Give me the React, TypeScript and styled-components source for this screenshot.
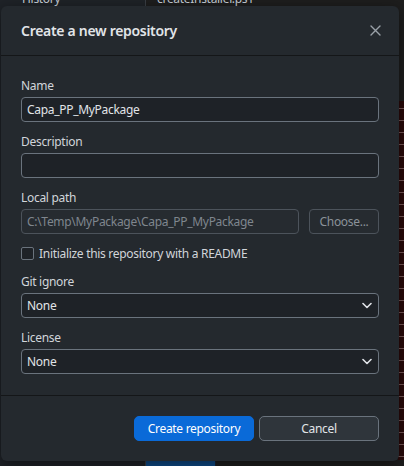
import React from "react";
import styled, { createGlobalStyle } from "styled-components";

const Global = createGlobalStyle`
  html, body { margin: 0; padding: 0; background: #1b1f23; }
  body { width: 404px; height: 466px; overflow: hidden; font-family: "Noto Sans", "Open Sans", sans-serif; }
  * { box-sizing: border-box; }
`;

const Stage = styled.div`
  position: relative;
  width: 404px;
  height: 466px;
  overflow: hidden;
  display: flex;
  background: #1e1e1e;
`;

const LeftPane = styled.div`
  width: 146px;
  flex: none;
  background: #1f2328;
  border-right: 1px solid #3a3f45;
  display: flex;
  flex-direction: column;
`;

const RightPane = styled.div`
  flex: 1;
  display: flex;
  flex-direction: column;
  background: #1e1e1e;
`;

const TabText = styled.div<{ $pad: number }>`
  height: 14px;
  line-height: 14px;
  margin-top: -8px;
  padding-left: ${(p) => p.$pad}px;
  font-size: 12px;
  letter-spacing: -0.3px;
  color: #c9d1d9;
  white-space: nowrap;
`;

const CodeArea = styled.div`
  flex: 1;
  display: flex;
  justify-content: flex-end;
`;

const CodeStrip = styled.div`
  width: 6px;
  display: flex;
  flex-direction: column;
`;

const CodeTop = styled.div`
  height: 95px;
  background: #1e1e1e;
`;

const CodeRed = styled.div`
  flex: 1;
  background: repeating-linear-gradient(
    180deg,
    #2b0a0a 0px,
    #2b0a0a 7px,
    #7a5a5a 7px,
    #7a5a5a 8px,
    #2b0a0a 8px,
    #2b0a0a 12px
  );
`;

const BlueBlock = styled.div`
  width: 70px;
  height: 6px;
  margin-top: auto;
  background: #0e4b8a;
  border-right: 1px solid #1a2230;
`;

const Dialog = styled.div`
  position: absolute;
  left: 1px;
  top: 6px;
  width: 398px;
  height: 455px;
  background: #24292e;
  border-radius: 6px;
  box-shadow: 0 4px 16px rgba(0, 0, 0, 0.5);
  display: flex;
  flex-direction: column;
  color: #d1d5da;
  letter-spacing: -0.3px;
`;

const Header = styled.div`
  height: 50px;
  flex: none;
  display: flex;
  align-items: center;
  justify-content: space-between;
  padding: 0 16px 0 20px;
  border-bottom: 1px solid #141618;
`;

const Title = styled.h1`
  margin: 0;
  font-size: 14px;
  font-weight: 600;
  color: #e1e4e8;
  letter-spacing: -0.3px;
`;

const CloseButton = styled.button`
  width: 16px;
  height: 16px;
  padding: 0;
  border: none;
  background: transparent;
  display: flex;
  align-items: center;
  justify-content: center;
`;

const Body = styled.div`
  flex: 1;
  padding: 22px 20px 0 20px;
  display: flex;
  flex-direction: column;
  border-bottom: 1px solid #141618;
`;

const Field = styled.div<{ $gap?: number }>`
  display: flex;
  flex-direction: column;
  margin-bottom: ${(p) => p.$gap ?? 12}px;
`;

const Label = styled.label`
  height: 16px;
  line-height: 16px;
  font-size: 12px;
  color: #d1d5da;
  margin-bottom: 3px;
`;

const Input = styled.div<{ $disabled?: boolean }>`
  height: 25px;
  flex: 1 1 auto;
  min-width: 0;
  border: 1px solid ${(p) => (p.$disabled ? "#4c535b" : "#6a737d")};
  border-radius: 4px;
  background: ${(p) => (p.$disabled ? "#262b30" : "#1e2227")};
  padding: 0 5px;
  display: flex;
  align-items: center;
  font-size: 12px;
  color: ${(p) => (p.$disabled ? "#7f868e" : "#e1e4e8")};
  white-space: nowrap;
  overflow: hidden;
`;

const Row = styled.div`
  display: flex;
  gap: 10px;
`;

const ChooseButton = styled.button`
  width: 70px;
  height: 25px;
  flex: none;
  border: 1px solid #4c535b;
  border-radius: 4px;
  background: #262b30;
  color: #8b9299;
  font-family: inherit;
  font-size: 12px;
  letter-spacing: -0.3px;
  padding: 0;
`;

const CheckRow = styled.div`
  height: 16px;
  display: flex;
  align-items: center;
  gap: 5px;
  margin-top: -1px;
  margin-bottom: 13px;
  font-size: 12px;
  color: #d1d5da;
`;

const CheckBox = styled.span`
  width: 13px;
  height: 13px;
  flex: none;
  border: 1px solid #6a737d;
  border-radius: 2px;
  background: #1e2227;
`;

const Select = styled.div`
  height: 25px;
  border: 1px solid #6a737d;
  border-radius: 4px;
  background: #1e2227;
  padding: 0 6px 0 5px;
  display: flex;
  align-items: center;
  justify-content: space-between;
  font-size: 12px;
  color: #e1e4e8;
`;

const Footer = styled.div`
  flex: none;
  padding: 20px;
  display: flex;
  justify-content: flex-end;
  gap: 5px;
`;

const Button = styled.button<{ $primary?: boolean }>`
  width: 120px;
  height: 25px;
  border-radius: 5px;
  border: 1px solid ${(p) => (p.$primary ? "#0a6ad8" : "#6a737d")};
  background: ${(p) => (p.$primary ? "#0a6ad8" : "#2f353b")};
  color: ${(p) => (p.$primary ? "#ffffff" : "#e1e4e8")};
  font-family: inherit;
  font-size: 12px;
  letter-spacing: -0.3px;
  padding: 0;
`;

const Chevron = () => (
  <svg width="10" height="7" viewBox="0 0 10 7" fill="none">
    <path d="M1 1.5 L5 5.5 L9 1.5" stroke="#e1e4e8" strokeWidth="1.6" strokeLinecap="round" strokeLinejoin="round" />
  </svg>
);

export default function App() {
  return (
    <>
      <Global />
      <Stage>
        <LeftPane>
          <TabText $pad={22}>History</TabText>
        </LeftPane>
        <RightPane>
          <TabText $pad={11}>createInstaller.ps1</TabText>
          <CodeArea>
            <CodeStrip>
              <CodeTop />
              <CodeRed />
            </CodeStrip>
          </CodeArea>
          <BlueBlock />
        </RightPane>
        <Dialog>
          <Header>
            <Title>Create a new repository</Title>
            <CloseButton aria-label="Close">
              <svg width="11" height="11" viewBox="0 0 11 11">
                <path d="M1 1 L10 10 M10 1 L1 10" stroke="#9aa1a8" strokeWidth="1.4" strokeLinecap="round" />
              </svg>
            </CloseButton>
          </Header>
          <Body>
            <Field>
              <Label>Name</Label>
              <Input>Capa_PP_MyPackage</Input>
            </Field>
            <Field>
              <Label>Description</Label>
              <Input />
            </Field>
            <Field>
              <Label>Local path</Label>
              <Row>
                <Input $disabled>C:\Temp\MyPackage\Capa_PP_MyPackage</Input>
                <ChooseButton>Choose...</ChooseButton>
              </Row>
            </Field>
            <CheckRow>
              <CheckBox />
              Initialize this repository with a README
            </CheckRow>
            <Field>
              <Label>Git ignore</Label>
              <Select>
                None
                <Chevron />
              </Select>
            </Field>
            <Field $gap={0}>
              <Label>License</Label>
              <Select>
                None
                <Chevron />
              </Select>
            </Field>
          </Body>
          <Footer>
            <Button $primary>Create repository</Button>
            <Button>Cancel</Button>
          </Footer>
        </Dialog>
      </Stage>
    </>
  );
}
